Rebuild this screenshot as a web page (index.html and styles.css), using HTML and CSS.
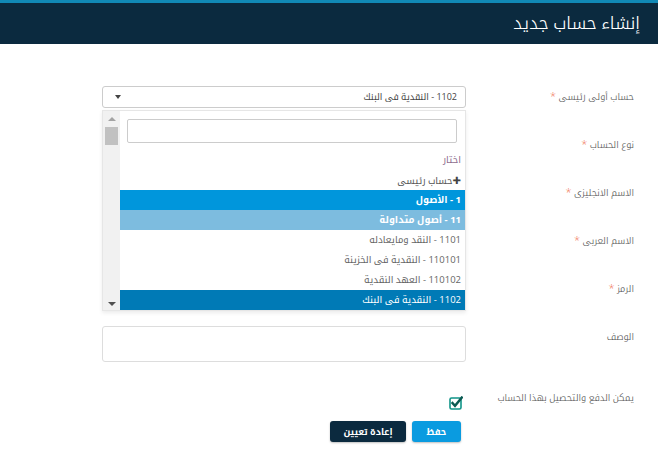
FILE: index.html
```html
<!DOCTYPE html>
<html lang="ar" dir="rtl">
<head>
<meta charset="utf-8">
<title>إنشاء حساب جديد</title>
<link rel="stylesheet" href="styles.css">
</head>
<body>
<header class="topbar">
  <h1 class="title">إنشاء حساب جديد</h1>
</header>
<main class="form">
  <div class="row">
    <label class="lbl">حساب أولى رئيسى <span class="req">*</span></label>
    <div class="field">
      <div class="select">
        <span class="select-text">1102 - النقدية فى البنك</span>
        <span class="caret"></span>
      </div>
      <div class="dropdown">
        <div class="dd-body">
          <div class="dd-search"><input class="dd-input" type="text"></div>
          <ul class="dd-list">
            <li class="opt opt-muted">اختار</li>
            <li class="opt opt-add"><span class="plus">✚</span>حساب رئيسى</li>
            <li class="opt opt-group">1 - الأصول</li>
            <li class="opt opt-sub">11 - أصول متداولة</li>
            <li class="opt">1101 - النقد ومايعادله</li>
            <li class="opt">110101 - النقدية فى الخزينة</li>
            <li class="opt">110102 - العهد النقدية</li>
            <li class="opt opt-selected">1102 - النقدية فى البنك</li>
          </ul>
        </div>
        <div class="dd-scroll">
          <span class="sb-up"></span>
          <span class="sb-thumb"></span>
          <span class="sb-down"></span>
        </div>
      </div>
    </div>
  </div>
  <div class="row">
    <label class="lbl">نوع الحساب <span class="req">*</span></label>
    <div class="field"><div class="input"></div></div>
  </div>
  <div class="row">
    <label class="lbl">الاسم الانجليزى <span class="req">*</span></label>
    <div class="field"><div class="input"></div></div>
  </div>
  <div class="row">
    <label class="lbl">الاسم العربى <span class="req">*</span></label>
    <div class="field"><div class="input"></div></div>
  </div>
  <div class="row">
    <label class="lbl">الرمز <span class="req">*</span></label>
    <div class="field"><div class="input"></div></div>
  </div>
  <div class="row row-area">
    <label class="lbl lbl-top">الوصف</label>
    <div class="field"><div class="textarea"></div></div>
  </div>
  <div class="row row-check">
    <label class="lbl lbl-check">يمكن الدفع والتحصيل بهذا الحساب</label>
    <div class="field">
      <svg class="check" width="14" height="14" viewBox="0 0 14 14">
        <rect x="1" y="2" width="11" height="11" rx="1.5" fill="#fff" stroke="#0f9488" stroke-width="1.6"/>
        <path d="M3.5 7 L6 9.8 L12.8 1.5" fill="none" stroke="#0b5a52" stroke-width="2.4" stroke-linecap="square"/>
      </svg>
      <div class="actions">
        <button class="btn btn-save">حفظ</button>
        <button class="btn btn-reset">إعادة تعيين</button>
      </div>
    </div>
  </div>
</main>
</body>
</html>
```
FILE: styles.css
```css
* { box-sizing: border-box; }
html, body { margin: 0; padding: 0; }
body {
  width: 658px;
  height: 470px;
  overflow: hidden;
  background: #fff;
  font-family: "Open Sans", "Noto Kufi Arabic", "DejaVu Sans", sans-serif;
  color: #555;
}
.topbar {
  height: 44px;
  background: #0b2a3f;
  border-top: 3px solid #1189b6;
  display: flex;
  align-items: center;
  padding-right: 18px;
}
.title {
  margin: 0;
  font-weight: 300;
  font-size: 17.5px;
  color: #fff;
}
.form {
  padding: 42px 24px 0 102px;
  display: flex;
  flex-direction: column;
}
.row {
  display: grid;
  grid-template-columns: 150px 364px;
  column-gap: 18px;
  align-items: center;
  height: 22px;
  margin-bottom: 26px;
}
.row-area { height: 36px; align-items: start; margin-top: 0; margin-bottom: 0; }
.row-check { height: auto; align-items: start; margin-top: 33px; }
.lbl {
  font-size: 9.5px;
  font-weight: 300;
  color: #555;
  white-space: nowrap;
}
.lbl-top { padding-top: 2px; }
.lbl-check { margin-top: -6px; }
.req { color: #f07050; font-size: 11px; }
.field { position: relative; height: 100%; }
.select {
  height: 22px;
  border: 1px solid #ccc;
  border-radius: 3px;
  display: flex;
  align-items: center;
  justify-content: space-between;
  padding: 0 8px 0 12px;
  font-size: 9px;
  color: #444;
  background: #fff;
}
.caret {
  width: 0; height: 0;
  border-left: 3.5px solid transparent;
  border-right: 3.5px solid transparent;
  border-top: 4px solid #444;
}
.input {
  height: 22px;
  border: 1px solid #ddd;
  border-radius: 3px;
}
.textarea {
  height: 36px;
  border: 1px solid #ddd;
  border-radius: 3px;
}
.dropdown {
  position: absolute;
  top: 24px;
  right: 0;
  width: 364px;
  height: 201px;
  background: #fff;
  border: 1px solid #e6e6e6;
  box-shadow: 0 2px 4px rgba(0,0,0,0.08);
  display: flex;
  z-index: 5;
}
.dd-body { flex: 1; overflow: hidden; }
.dd-search { padding: 8px 8px 7px 7px; }
.dd-input {
  display: block;
  width: 100%;
  height: 24px;
  border: 1px solid #ccc;
  border-radius: 2px;
  outline: none;
}
.dd-list { list-style: none; margin: 0; padding: 0; }
.opt {
  height: 20px;
  line-height: 20px;
  padding-right: 4px;
  font-size: 9.5px;
  color: #666;
  white-space: nowrap;
}
.opt-muted { color: #8b6a8a; }
.opt-add { color: #555; }
.plus { color: #444; font-size: 10px; }
.opt-group { background: #0096dc; color: #fff; font-weight: bold; }
.opt-sub { background: #7dbcdf; color: #fff; font-weight: bold; }
.opt-selected { background: #007ab6; color: #fff; }
.dd-scroll {
  width: 17px;
  background: #f1f1f1;
  display: flex;
  flex-direction: column;
  align-items: center;
  padding: 6px 0 4px;
}
.sb-up {
  width: 0; height: 0;
  border-left: 4px solid transparent;
  border-right: 4px solid transparent;
  border-bottom: 4px solid #a3a3a3;
}
.sb-thumb {
  width: 13px;
  height: 18px;
  background: #c1c1c1;
  margin-top: 6px;
}
.sb-down {
  margin-top: auto;
  width: 0; height: 0;
  border-left: 4px solid transparent;
  border-right: 4px solid transparent;
  border-top: 4px solid #505050;
}
.check {
  display: block;
  margin-right: 3px;
  margin-top: 1px;
}
.actions {
  display: flex;
  gap: 6px;
  margin-top: 11px;
  padding-right: 5px;
}
.btn {
  height: 21px;
  border: none;
  border-radius: 3px;
  color: #fff;
  font-family: inherit;
  font-size: 9px;
  font-weight: bold;
  padding: 0;
  box-shadow: 0 1px 2px rgba(0,0,0,0.25);
}
.btn-save { width: 49px; background: #0a9be0; }
.btn-reset { width: 76px; background: #0b2a3f; }
```
